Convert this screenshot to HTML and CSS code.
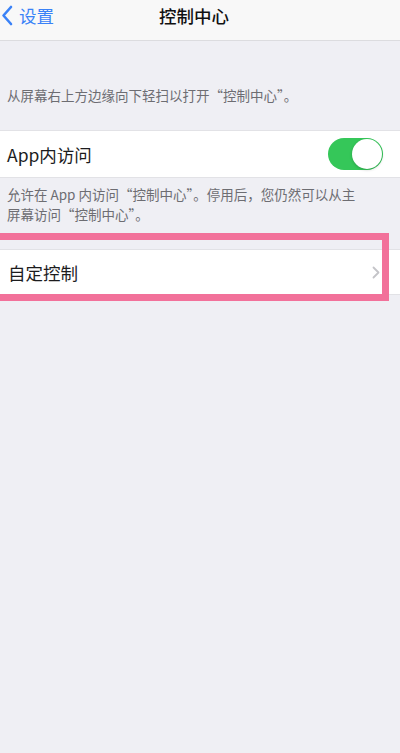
FILE: index.html
```html
<!DOCTYPE html>
<html lang="zh-CN">
<head>
    <meta charset="UTF-8">
    <meta name="viewport" content="width=device-width, initial-scale=1.0">
    <title>控制中心</title>
    <link rel="stylesheet" href="styles.css">
</head>
<body>
    <!-- 导航栏 -->
    <div class="nav-bar">
        <div class="nav-back">
            <svg class="back-icon" width="12" height="21" viewBox="0 0 12 21">
                <path d="M10 2 L2.5 10.5 L10 19" fill="none" stroke="#3a82f7" stroke-width="2.6" stroke-linecap="round" stroke-linejoin="round"/>
            </svg>
            <span>设置</span>
        </div>
        <div class="nav-title">控制中心</div>
        <div></div>
    </div>

    <div class="group-header">从屏幕右上方边缘向下轻扫以打开“控制中心”。</div>

    <div class="cell">
        <div class="cell-label">App内访问</div>
        <div class="switch on">
            <div class="switch-knob"></div>
        </div>
    </div>

    <div class="group-footer">允许在 App 内访问“控制中心”。停用后，您仍然可以从主<br>屏幕访问“控制中心”。</div>

    <div class="cell cell-link highlighted">
        <div class="cell-label">自定控制</div>
        <svg class="chevron" width="8" height="13" viewBox="0 0 8 13">
            <path d="M1.5 1.5 L6.5 6.5 L1.5 11.5" fill="none" stroke="#c4c4c8" stroke-width="1.8" stroke-linecap="round" stroke-linejoin="round"/>
        </svg>
        <span class="mark"></span>
    </div>
</body>
</html>
```

FILE: styles.css
```css
* {
    font-family: "Noto Sans CJK SC", "Noto Sans", sans-serif;
    box-sizing: border-box;
}

body {
    margin: 0;
    padding: 0;
    background: #efeff4;
    height: 100vh;
    overflow: hidden;
}

.nav-bar {
    height: 41px;
    background: #f8f8f8;
    border-bottom: 1px solid #dcdcdf;
    display: grid;
    grid-template-columns: 1fr auto 1fr;
    align-items: center;
}

.nav-back {
    display: flex;
    align-items: center;
    gap: 6px;
    padding-left: 1px;
    color: #3a82f7;
    font-size: 17.5px;
    margin-top: -9px;
}

.nav-title {
    font-size: 17.5px;
    font-weight: 500;
    color: #111;
    margin-top: -9px;
    margin-right: 12px;
}

.group-header {
    margin-top: 44px;
    padding: 0 7px;
    font-size: 13.5px;
    line-height: 20px;
    color: #6d6d72;
}

.cell {
    margin-top: 25px;
    height: 48px;
    background: #fff;
    border-top: 1px solid #e2e2e6;
    border-bottom: 1px solid #e2e2e6;
    display: flex;
    align-items: center;
    justify-content: space-between;
    padding: 0 17px 0 7px;
    position: relative;
}

.cell-label {
    font-size: 17.5px;
    color: #1c1c1e;
}

.switch {
    width: 55px;
    height: 32px;
    border-radius: 16px;
    background: #e5e5ea;
    padding: 1px;
    display: flex;
}

.switch.on {
    background: #35c759;
    justify-content: flex-end;
}

.switch-knob {
    width: 30px;
    height: 30px;
    border-radius: 50%;
    background: #fff;
    box-shadow: 0 1px 3px rgba(0, 0, 0, 0.2);
}

.group-footer {
    margin-top: 6px;
    padding: 0 7px;
    font-size: 13.5px;
    line-height: 20px;
    color: #6d6d72;
}

.cell-link {
    margin-top: 25px;
    height: 46px;
    padding-left: 8px;
    padding-right: 20px;
}

.chevron {
    display: block;
}

/* 粉色标注框 */
.highlighted .mark {
    position: absolute;
    top: -17px;
    bottom: -7px;
    left: -10px;
    right: 11px;
    border: 7px solid #f2719a;
    pointer-events: none;
}
```
